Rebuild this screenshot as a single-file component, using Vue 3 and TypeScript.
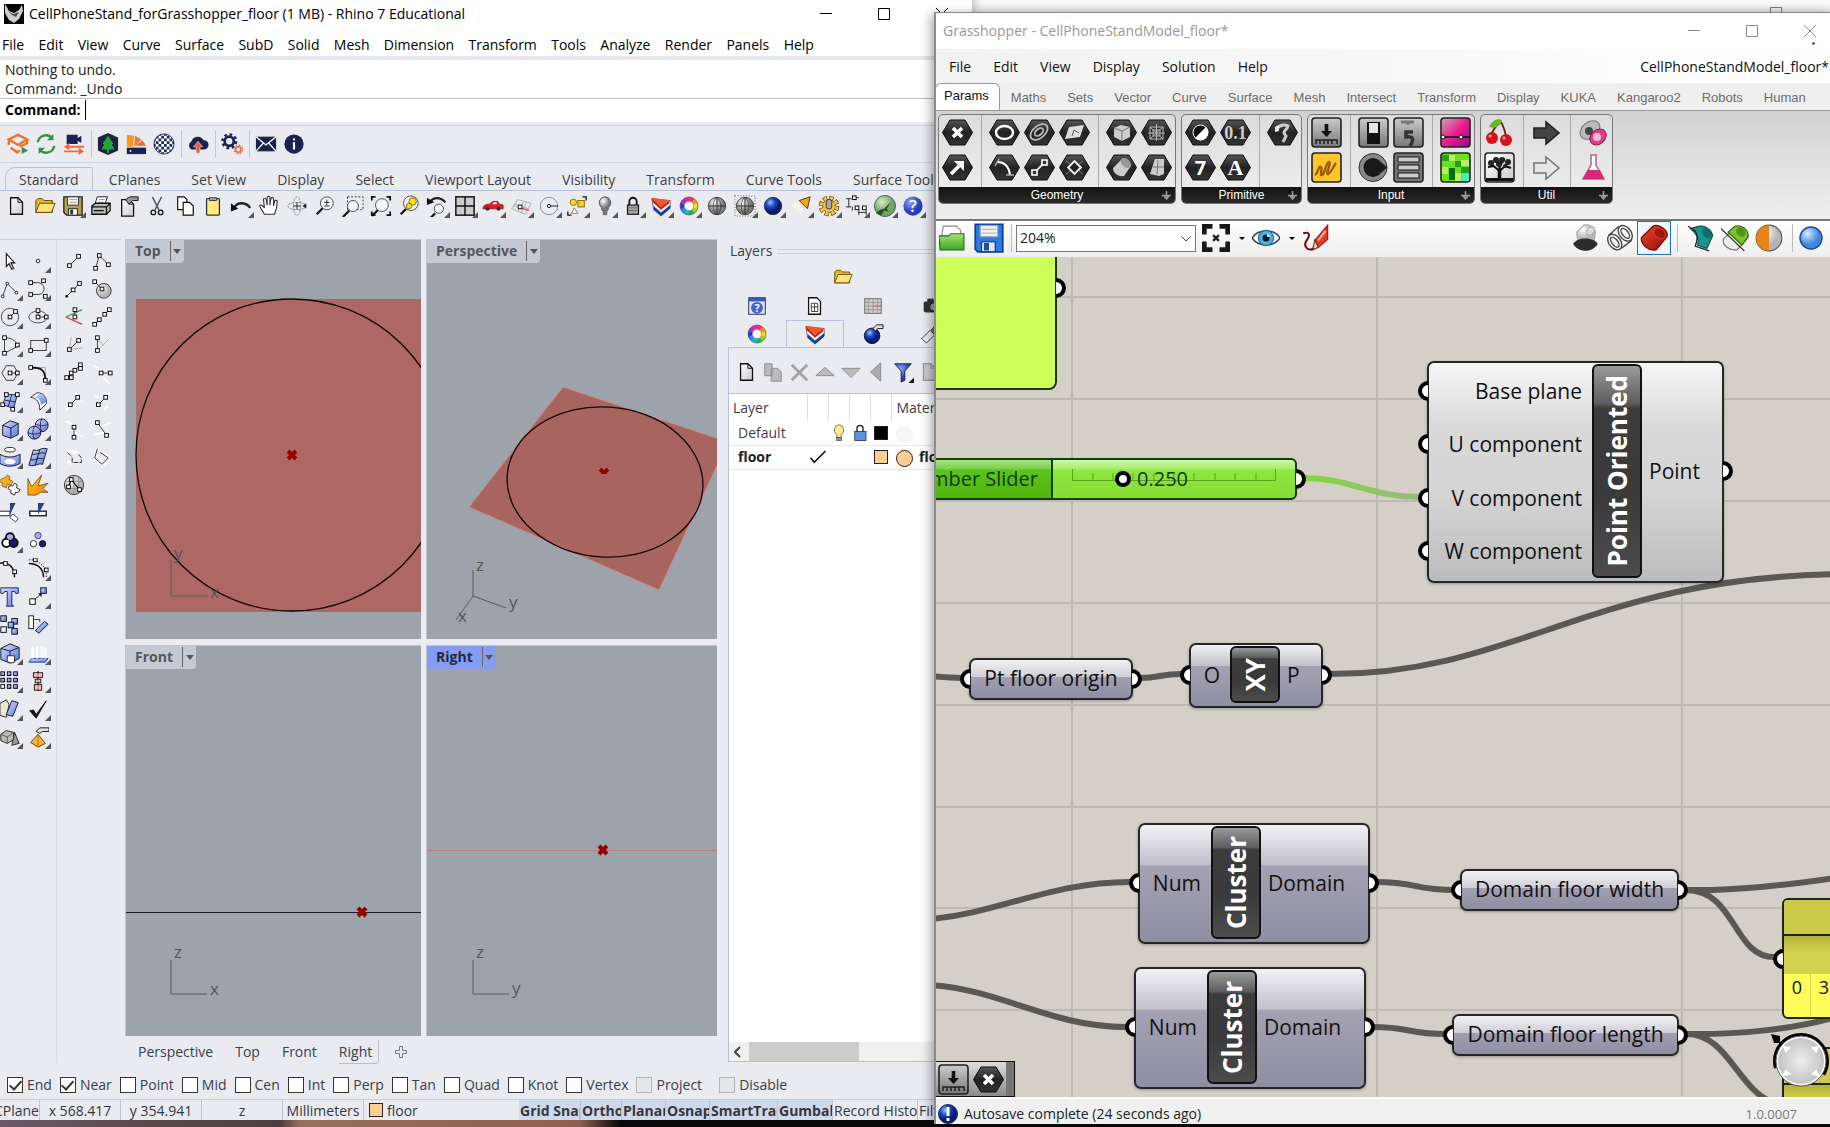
<script setup lang="ts">
import { h } from 'vue'

/* ---------- small drawing helpers for the tool glyphs ---------- */
const sq = (x: number, y: number) =>
  `<rect x="${x - 2}" y="${y - 2}" width="4" height="4" fill="#fff" stroke="#000"/>`
const ln = (d: string, c = '#333', w = 1) =>
  `<path d="${d}" fill="none" stroke="${c}" stroke-width="${w}"/>`
const box = (x: number, y: number, f = 'url(#peri)', s = 6) =>
  `<rect x="${x}" y="${y}" width="${s}" height="${s}" fill="${f}" stroke="#001"/>`
const page = (x: number, y: number, f = 'url(#paper)', c = '#111') =>
  `<path d="M${x} ${y}h8l5 5v13h-13z" fill="${f}" stroke="${c}" stroke-width="1.4"/><path d="M${x + 8} ${y}v5h5" fill="none" stroke="${c}"/>`
const lens = (x: number, y: number, r = 6) =>
  `<path d="M${x - 4} ${y + 5}l-7 7" stroke="#111" stroke-width="2.4"/><circle cx="${x}" cy="${y}" r="${r}" fill="#f4f6f8" stroke="#444"/>`
const ball = (f: string, extra = '') =>
  `<circle cx="12" cy="12" r="9.5" fill="url(#${f})" stroke="#222" stroke-width=".8"/>${extra}`
const wheel = (() => {
  const cs = ['#f33', '#f83', '#fd0', '#8d1', '#1b4', '#1bb', '#28f', '#33d', '#93d', '#e2a']
  return cs.map((c, i) => {
    const a = (i / 10) * 2 * Math.PI - Math.PI / 2
    const b = ((i + 1.1) / 10) * 2 * Math.PI - Math.PI / 2
    const p = (t: number) => `${(12 + 7.4 * Math.cos(t)).toFixed(2)} ${(12 + 7.4 * Math.sin(t)).toFixed(2)}`
    return `<path d="M${p(a)}A7.4 7.4 0 0 1 ${p(b)}" fill="none" stroke="${c}" stroke-width="4.4"/>`
  }).join('') + '<circle cx="12" cy="12" r="9.8" fill="none" stroke="#222" stroke-width=".6"/><circle cx="12" cy="12" r="5" fill="#fff" stroke="#555" stroke-width=".5"/>'
})()
const wedge =
  '<path d="M2 4L22 6v8L12 23 4 16z" fill="#fff" stroke="#222" stroke-width=".7"/><path d="M2 3L21 6 12 13z" fill="#f4562f"/><path d="M2 3l10 10v3L3 8zM12 13l9-7v3l-9 7z" fill="#c9200f"/><path d="M12 19l10-8v4l-10 8-8-7v-4z" fill="#1c3f9c"/>'
const folder =
  '<path d="M2 6l2-2h5l2 2h9v13H2z" fill="#e9b92d" stroke="#5b4300"/><path d="M2 19L6 9h17l-4 10z" fill="#ffe27a" stroke="#5b4300"/>'
const meridians = '<path d="M12 3v18M3 12h18" stroke="#222"/><ellipse cx="12" cy="12" rx="4" ry="9" fill="none" stroke="#333" stroke-width=".7"/>'

const art: Record<string, string> = {
  /* render plug-in bar */
  start: '<path d="M2 7l10-5 10 5-10 6zM2 7v6M4 16l7 5 3-2M22 7v4l-8 4" fill="none" stroke="#e8762b" stroke-width="2.6"/><path d="M16 15l7 4-7 4z" fill="#2c9440"/>',
  sync: '<path d="M3 10a9 9 0 0 1 16-4M21 14a9 9 0 0 1-16 4" fill="none" stroke="#32923d" stroke-width="2.6"/><path d="M20 1v7h-7zM4 23v-7h7z" fill="#32923d"/>',
  camera: '<path d="M4 2h12v10H4zM15 6l5-3v8l-5-3z" fill="#1b2250"/><path d="M7 15h16M1 20h16" stroke="#ef6a3c" stroke-width="2"/><path d="M7 11l-6 4 6 4zM17 16l6 4-6 4z" fill="#ef6a3c"/>',
  tree: '<path d="M12 0l11 5v14l-11 5-11-5V5z" fill="#1d2340"/><path d="M12 3l6 9h-2l3 6h-6v4h-2v-4H5l3-6H6z" fill="#23a53a"/>',
  swatch: '<path d="M2 2l8 1-1 12H2z" fill="#f39a1c"/><path d="M11 3l7 4-8 8z" fill="#f2752a"/><path d="M19 8l4 6H11z" fill="#ef6a3c"/><rect x="2" y="16" width="21" height="7" fill="#1b2250"/><circle cx="6" cy="19.500" r="1" fill="#fff"/>',
  checker: '<circle cx="12" cy="12" r="11" fill="url(#chk)" stroke="#222a55"/>',
  cloud: '<path d="M5 18a5 5 0 0 1 0-9 7 7 0 0 1 13-1 5 5 0 0 1 1 10z" fill="#1b2250"/><path d="M12 9l5 6h-3v7h-4v-7H7z" fill="#ef5a3c" stroke="#e9ebf0" stroke-width=".6"/>',
  gears: '<circle cx="9" cy="9" r="5" fill="none" stroke="#1b2250" stroke-width="3"/><circle cx="9" cy="9" r="7.500" fill="none" stroke="#1b2250" stroke-width="2.600" stroke-dasharray="3 2.900"/><circle cx="19" cy="18" r="3" fill="none" stroke="#ef6a3c" stroke-width="1.600"/><circle cx="19" cy="18" r="4.600" fill="none" stroke="#ef6a3c" stroke-width="1.600" stroke-dasharray="1.800 1.800"/>',
  mail: '<rect x="1" y="4" width="22" height="16" fill="#1b2250"/><path d="M1 4l11 9 11-9M1 20l8-9M23 20l-8-9" fill="none" stroke="#fff" stroke-width="1.500"/>',
  info: '<circle cx="12" cy="12" r="10.500" fill="#1b2250"/><path d="M12 10v8M12 6v2" stroke="#fff" stroke-width="2.400"/>',
  /* standard bar */
  file: page(5, 3, 'url(#paper)'),
  open: folder,
  save: '<path d="M2 2h20v20H5l-3-3z" fill="#b1a24a" stroke="#222" stroke-width="1.400"/><rect x="6" y="2" width="12" height="9" fill="#f5f5f5" stroke="#333"/><path d="M8 5h8M8 8h8" stroke="#999"/><rect x="7" y="15" width="10" height="7" fill="#eee" stroke="#222"/><rect x="9" y="16" width="3" height="5" fill="#333"/>',
  print: '<path d="M8 2h11l-3 9H5z" fill="#fff" stroke="#111"/><path d="M10 5h6M9 8h6" stroke="#888"/><path d="M2 12l4-3h16v8l-4 4H2z" fill="#bbb" stroke="#111" stroke-width="1.400"/><path d="M2 13h16v8M18 13l4-4M4 17h11" fill="none" stroke="#111" stroke-width="1.400"/>',
  props: page(4, 5) + '<path d="M8 5l5-3h9v4h-6l-4 4z" fill="#999" stroke="#111"/>',
  cut: '<path d="M7 2l7 14M17 2l-7 14" stroke="#555" stroke-width="1.600"/><circle cx="8" cy="19" r="2.500" fill="none" stroke="#111" stroke-width="1.400"/><circle cx="16" cy="19" r="2.500" fill="none" stroke="#111" stroke-width="1.400"/>',
  copy: '<path d="M4 2h7l3 3v11H4z" fill="#fff" stroke="#111" stroke-width="1.300"/><path d="M10 8h7l4 4v10H10z" fill="#fff" stroke="#111" stroke-width="1.300"/>',
  paste: '<rect x="5" y="4" width="14" height="18" rx="1" fill="#ffec7c" stroke="#333" stroke-width="1.400"/><path d="M8 6V3h8v3z" fill="#aaa" stroke="#333"/>',
  undo: '<path d="M5 13C9 7 18 8 22 14" fill="none" stroke="#222" stroke-width="2.600"/><path d="M1 9v9l8-3z" fill="#111"/>',
  pan: '<path d="M7 21c-2-4-5-7-5-9s3-1 5 2L6 5c0-2 2-2 3 0l1 6V3c0-2 3-2 3 0v8l1-7c1-2 3-1 3 0v8l1-5c1-2 3-1 3 0 0 6-1 9-3 14z" fill="#fff" stroke="#333" stroke-width="1.200"/>',
  rotate: '<ellipse cx="12" cy="12" rx="10" ry="4" fill="none" stroke="#888" stroke-dasharray="3 1"/><ellipse cx="12" cy="12" rx="4" ry="10" fill="none" stroke="#888" stroke-dasharray="3 1"/><path d="M12 8v8M8 12h8" stroke="#222"/><path d="M18 12l4-3v6z" fill="#222"/>',
  zoom: lens(14, 9, 7) + '<path d="M11 8h6M14 5v6M11 12h6" stroke="#222"/>',
  zoomwin: '<rect x="6" y="2" width="17" height="14" fill="none" stroke="#222" stroke-dasharray="2 2"/>' + lens(12, 12),
  zoomext: '<path d="M2 6V2h4M18 2h4v4M22 18v4h-4M6 22H2v-4" fill="none" stroke="#111" stroke-width="2"/>' + lens(13, 11, 7),
  zoomsel: lens(14, 9, 8) + '<circle cx="16" cy="7" r="4" fill="#fd2" stroke="#860"/><circle cx="12" cy="12" r="3" fill="#fd2" stroke="#860"/>',
  zoomundo: lens(14, 15, 5) + '<path d="M4 8c4-6 12-6 17 0" fill="none" stroke="#222" stroke-width="2.400"/><path d="M1 3v8l8-3z" fill="#111"/>',
  four: '<rect x="2" y="2" width="20" height="20" fill="#ccc" stroke="#111" stroke-width="1.600"/><path d="M12 2v20M2 12h20" stroke="#111" stroke-width="1.600"/>',
  car: '<path d="M1 14l2-3 5-1 4-3h5l2 3 4 1v4H1z" fill="#dc1f26" stroke="#a11"/><path d="M11 10l2-2h3v2z" fill="#fff"/><circle cx="6" cy="15" r="2.200" fill="#333"/><circle cx="18" cy="15" r="2.200" fill="#333"/>',
  cplane: '<path d="M2 15L8 5l15 4-6 12zM5 10l15 5M9 17L15 7M4 12l15 5M12 19l6-11" fill="none" stroke="#aaa"/><path d="M12 14l9 3" stroke="#c33"/><rect x="9" y="11" width="4" height="4" fill="#fff" stroke="#111"/>',
  osn: '<circle cx="12" cy="12" r="9.500" fill="none" stroke="#888"/><path d="M12 12h10" stroke="#111"/><circle cx="12" cy="12" r="1.800" fill="#fff" stroke="#111"/>',
  sel: '<circle cx="8" cy="8" r="3.500" fill="#fd2" stroke="#860"/><rect x="13" y="6" width="7" height="7" fill="#fc2" stroke="#860"/><path d="M9 14l4 6H6z" fill="#fff" stroke="#b63"/><path d="M18 2h4v4M2 18v4h4" fill="none" stroke="#111" stroke-width="1.400"/>',
  bulb: '<path d="M12 2a6.500 6.500 0 0 1 4 11.500L15 17H9l-1-3.500A6.500 6.500 0 0 1 12 2z" fill="url(#grey)" stroke="#555"/><rect x="9.500" y="17" width="5" height="5" fill="#777"/>',
  lock: '<path d="M8 11V7a4 4 0 0 1 8 0v4" fill="none" stroke="#111" stroke-width="2"/><rect x="6" y="11" width="12" height="10" fill="#aaa" stroke="#111" stroke-width="1.300"/><path d="M7 14h10M7 17h10" stroke="#666"/>',
  wedge,
  wheel,
  wire: ball('grey', meridians),
  wiredot: '<rect x="1" y="1" width="22" height="22" fill="none" stroke="#999" stroke-dasharray="1 2" stroke-width="2"/>' + ball('grey', meridians),
  blueball: ball('blue'),
  cone: '<path d="M0 12L13 3v18z" fill="#f6f2e4"/><path d="M10 6l12-4-3 13z" fill="#f6a21d" stroke="#333"/>',
  gear: '<circle cx="12" cy="12" r="8.500" fill="none" stroke="#6b4b00" stroke-width="5.600" stroke-dasharray="4.500 2.170"/><circle cx="12" cy="12" r="7" fill="#f6c24a" stroke="#6b4b00"/><circle cx="12" cy="12" r="8.500" fill="none" stroke="#f6c24a" stroke-width="4" stroke-dasharray="3.200 3.470" stroke-dashoffset="-.6"/><rect x="9" y="5" width="6" height="10" rx="2" fill="#aaa" stroke="#333"/>',
  dims: '<path d="M3 4v9M0 4h6M0 13h6M9 3h5M9 1v4M7 13v4M14 16v6M22 16v6M14 19h8" stroke="#222" fill="none"/>' + sq(9, 3) + sq(12, 14) + sq(20, 14),
  hopper: '<circle cx="12" cy="12" r="11.500" fill="url(#green)" stroke="#456"/><path d="M2 20c3-3 6-5 9-5l8-8-5 8 2 3-5-1-3 5z" fill="#344b2e"/>',
  help: '<circle cx="12" cy="12" r="10.500" fill="url(#royal)"/><text x="12" y="19" font-size="18" font-family="Open Sans, sans-serif" font-weight="600" fill="#fff" text-anchor="middle">?</text>',
  /* main side bar */
  arrow: '<path d="M8 4v14l3-3 3 6 2-1-3-6h4z" fill="#fff" stroke="#111" stroke-width="1.200"/>',
  point: '<circle cx="12" cy="12" r="2" fill="#fff" stroke="#222"/>',
  poly: ln('M4 20L9 6l10 10') + '<circle cx="4" cy="20" r="1.500" fill="#fff" stroke="#111"/><circle cx="9" cy="6" r="1.500" fill="#fff" stroke="#111"/><circle cx="19" cy="16" r="1.500" fill="#fff" stroke="#111"/>',
  curve: ln('M5 5h6c10 0 10 13 1 13H5') + sq(4, 5) + sq(4, 18) + sq(18, 3) + sq(20, 20),
  circle: '<circle cx="12" cy="12" r="9.500" fill="none" stroke="#444"/>' + ln('M12 12l6-6') + sq(12, 12) + sq(18, 6),
  ellipse: '<ellipse cx="12" cy="12" rx="10" ry="6.500" fill="none" stroke="#444"/>' + ln('M12 12V5M12 12h9') + sq(12, 5) + sq(12, 12) + sq(21, 12),
  arc: ln('M6 21V4c7 0 12 3 15 9L6 21') + sq(6, 4) + sq(6, 21) + sq(20, 12),
  rect: '<rect x="4" y="7" width="17" height="11" fill="none" stroke="#333"/>' + sq(4, 18) + sq(21, 7),
  hexa: ln('M8 4h8l5 8-5 8H8l-5-8z') + ln('M12 12h8') + sq(12, 12) + sq(20, 12),
  fillet: ln('M4 6h16v14', '#aaa') + ln('M4 6c12 0 16 3 16 14', '#111', 2) + sq(4, 6) + sq(20, 20),
  srfpt: '<path d="M8 5h12l-4 15-12-4z" fill="url(#peri)" stroke="#224"/>' + ln('M14 5l-4 13M6 11l12 2', '#224') + sq(8, 5) + sq(20, 5) + sq(4, 16) + sq(15, 21),
  srfcv: '<path d="M4 8l7-5c7 0 11 5 10 12l-7 7c0-8-3-13-10-14z" fill="#fff" stroke="#222"/><path d="M8 8l6-4c5 1 7 5 7 9l-6 3c0-5-3-7-7-8z" fill="url(#peri)"/>',
  cube: '<path d="M4 8l8-5 9 3v12l-8 4-9-3z" fill="url(#peri)" stroke="#112"/><path d="M4 8l9 3 8-5M13 11v11" fill="none" stroke="#112"/>',
  balls: '<circle cx="16" cy="8" r="7" fill="url(#peri)" stroke="#112"/><path d="M9 6c4 3 9 3 14 1M16 1c-2 4-2 9 0 14" fill="none" stroke="#112" stroke-width=".8"/><circle cx="8" cy="16" r="7" fill="url(#peri)" stroke="#112"/><path d="M1 16c4 2 9 2 14 0M8 9c-2 4-2 10 0 14" stroke="#112" fill="none" stroke-width=".8"/>',
  tube: '<ellipse cx="12" cy="4" rx="6" ry="2.500" fill="#fff" stroke="#222"/><path d="M1 9c6 4 15 4 22 0v10c-7 4-16 4-22 0z" fill="url(#peri)" stroke="#112"/><ellipse cx="12" cy="17" rx="6" ry="3" fill="#fff"/>',
  quilt: '<path d="M7 4c5 3 8-3 15-1l-5 17c-5-2-8 3-15 1z" fill="url(#peri)" stroke="#112"/><path d="M14 4l-5 17M4 15c6 1 8-3 14-1M5 9c6 1 9-3 15-1" fill="none" stroke="#112"/>',
  puzzle: '<path d="M3 5l4-1 2-3 3 2-1 3 4 2-2 4-4-1-1 4-5-2 1-3-4-2z" fill="#f7ae1c" stroke="#863"/><path d="M11 13l4 0 2-3 3 2-1 3 4 2-2 3-3 0-1 3-4-2 0-3-3-2z" fill="#fff" stroke="#222"/>',
  burst: '<path d="M1 5l4 9L16 1l-4 12 11-3-6 6 6 4h-8l-5 3H1z" fill="url(#flame)" stroke="#6a3a00" stroke-width=".8"/>',
  trim: '<rect x="0" y="10" width="12" height="5" fill="#fff" stroke="#111"/><path d="M12 1h6l-6 13z" fill="#24409c"/><path d="M15 13l6 5-3 4-6-5z" fill="#fff" stroke="#444"/>',
  split: '<rect x="3" y="10" width="18" height="5" fill="#fff" stroke="#111" stroke-width="1.400"/><path d="M12 1h7l-7 13z" fill="#24409c"/>',
  union: '<g stroke="#111" stroke-width="2"><circle cx="12" cy="8" r="4.500" fill="#a9a6f4"/><circle cx="8" cy="14" r="4.500" fill="#fff"/><circle cx="16" cy="14" r="4.500" fill="#1d1a72"/></g><circle cx="12" cy="8" r="3" fill="#a9a6f4"/>',
  apart: '<circle cx="12" cy="6" r="3.500" fill="#a9a6f4" stroke="#446"/><circle cx="7" cy="15" r="3.500" fill="#fff" stroke="#222"/><circle cx="17" cy="15" r="3.500" fill="#1d1a72" stroke="#113"/>',
  cvedit: ln('M0 6c10-2 17 3 17 15', '#111', 1.6) + sq(7, 6) + sq(17, 15),
  cvpts: ln('M2 6c10 0 16 6 16 15', '#111', 1.6) + '<path d="M2 2h8l11 10v9" fill="none" stroke="#111" stroke-dasharray="1.500 1.500"/>' + sq(9, 2) + sq(21, 13),
  text: '<path d="M2 2h19v6h-3l-1-2h-3v14l2 2H8l1-2V6H6L5 8H2z" fill="url(#peri)" stroke="#12205c"/>',
  move: ln('M8 15l7-6') + '<path d="M12 8h4v4z" fill="#111"/>' + box(3, 14, '#fff') + box(15, 2),
  blocks: box(2, 2) + box(14, 5) + box(10, 9) + box(2, 14, '#eee') + box(14, 16),
  spin: '<rect x="2" y="2" width="5" height="14" fill="#fff" stroke="#111"/><path d="M9 18L19 8l4 3-10 10z" fill="url(#peri)" stroke="#112"/><path d="M8 6h6v3" fill="none" stroke="#333"/>',
  cubecut: '<path d="M2 7l10-5 10 4v12l-10 5-10-4z" fill="url(#peri)" stroke="#112"/><path d="M2 7l10 3 10-4M12 10v6" fill="none" stroke="#112"/><path d="M9 15h8v7l-5 1-3-2z" fill="#fff" stroke="#222"/>',
  flow: '<path d="M5 18h18l-3 4H2z" fill="url(#peri)" stroke="#24409c"/><path d="M6 18V5M11 18V5M16 18V5M20 18V6" stroke="#fff" stroke-width="2.400"/>',
  grid: [2, 9, 16].map(x => [2, 9, 16].map(y => box(x, y, x === 2 && y === 16 ? '#fff' : 'url(#peri)', 4)).join('')).join(''),
  align: '<path d="M12 1v22" stroke="#c33" stroke-width="2"/><g fill="#f7b3b3" fill-opacity=".7" stroke="#111"><rect x="7" y="3" width="10" height="5"/><rect x="9" y="10" width="6" height="4"/><rect x="8" y="16" width="8" height="6"/></g>',
  copies: '<path d="M1 6l7-4 3 5-3 14-7-2z" fill="#eee6d8" stroke="#222"/><path d="M14 3l7 2-6 15-7-2z" fill="url(#peri)" stroke="#112"/>',
  check: '<path d="M3 14l4-1 3 5L21 3 10 22z" fill="#111" stroke="#111"/>',
  solids: '<path d="M2 9l6-4 8 2v8l-7 4-7-3z" fill="#bbb" stroke="#222"/><path d="M2 9l7 3 7-5M9 12v7" fill="none" stroke="#555"/><path d="M17 7l5 12-8 2z" fill="#999" stroke="#222"/>',
  pyramid: '<path d="M12 9l8 10-8 4-8-5z" fill="#fbb63a" stroke="#5b3c00"/><path d="M12 9v14" stroke="#a36a00"/><path d="M10 6l4-4h10v4h-7l-3 2z" fill="#ddd" stroke="#111"/>',
  /* lines bar */
  l1: ln('M7 17L17 7') + sq(7, 17) + sq(17, 7),
  l2: ln('M5 20L9 6l10 10') + sq(5, 20) + sq(9, 6) + sq(19, 16),
  l3: ln('M4 20L18 6') + sq(11, 13) + sq(18, 6) + '<circle cx="4" cy="20" r="1.500" fill="#111"/>',
  l4: '<circle cx="14" cy="14" r="8" fill="url(#soft)" stroke="#333"/>' + ln('M4 4l8 8') + sq(4, 4) + sq(12, 12),
  l5: '<path d="M3 12l18-8" stroke="#3c9a4a" stroke-width="1.400"/><path d="M3 12l18 8" stroke="#d33" stroke-width="1.400"/>' + ln('M13 4v9') + sq(13, 4) + sq(13, 12),
  l6: ln('M4 20L20 4', '#999') + sq(4, 20) + sq(9, 15) + sq(15, 9) + sq(20, 4),
  l7: ln('M7 17L9 3M7 17l15-2', '#aaa') + ln('M7 17L17 7') + sq(7, 17) + sq(17, 7),
  l8: ln('M7 18L20 5M7 8c4 0 5 2 6 5', '#aaa') + ln('M7 4v14') + sq(7, 4) + sq(7, 18),
  l9: ln('M2 20L19 3', '#444') + sq(4, 17) + sq(9, 17) + sq(9, 12) + sq(13, 9) + sq(19, 7) + sq(19, 3),
  l10: ln('M2 4c10 2 9 15 18 19', '#fff', 2) + ln('M11 12h10') + sq(11, 12) + sq(21, 12),
  l11: ln('M14 2v6M3 22l4-4M18 12h4', '#fff', 2) + ln('M8 16l8-8') + sq(8, 16) + sq(16, 8),
  l12: ln('M4 6l4 2M14 22l4-4M18 4h4', '#fff', 2) + ln('M8 16l8-8') + sq(8, 16) + sq(16, 8),
  l13: ln('M2 4c8 0 8 4 9 8 2 6 6 8 11 8', '#fff', 2) + ln('M12 10v11') + sq(12, 10) + sq(12, 21),
  l14: ln('M14 8l8-3M4 18l10-2', '#fff', 2) + ln('M7 5l10 14') + sq(7, 5) + sq(17, 19),
  l15: ln('M4 5l14 3M5 16l4 4', '#fff', 3) + '<path d="M5 7l5 5M10 13v5h10v-5l-4-5" fill="none" stroke="#222" stroke-dasharray="5 1.500"/>',
  l16: '<path d="M7 3L4 14l9 7 7-8-8-6" fill="none" stroke="#fff" stroke-width="3"/><path d="M7 3L4 13l8 7 7-7-9-6" fill="none" stroke="#222"/>',
  l17: '<circle cx="12" cy="12" r="10.500" fill="url(#soft)" stroke="#333"/><path d="M12 2v20M3 8h18M3 16h18M7 3v18M17 3v18" stroke="#777" stroke-width=".7" fill="none"/>' + ln('M6 14L9 6l9 11', '#111', 1.4) + sq(6, 14) + sq(9, 6) + sq(18, 17),
  /* panel */
  helpbox: '<rect x="3" y="3" width="18" height="18" fill="#dfe6ff" stroke="#223"/><rect x="3" y="3" width="18" height="4" fill="#3a59b8"/><circle cx="12" cy="14" r="6.500" fill="#4a62c4"/><text x="12" y="19" font-size="12" font-family="Open Sans, sans-serif" font-weight="700" fill="#fff" text-anchor="middle">?</text>',
  sheet: '<path d="M5 3h9l4 4v14H5z" fill="#fff" stroke="#111" stroke-width="1.400"/><path d="M8 9h7v9H8zM8 13h7M11.500 9v9" fill="none" stroke="#333"/>',
  graph: '<rect x="3" y="4" width="18" height="16" fill="#ccc" stroke="#666"/><path d="M3 8h18M3 12h9M3 16h18M7 4v16M12 4v16M17 4v16" stroke="#999"/><path d="M12 12h9" stroke="#c44"/>',
  photo: '<rect x="4" y="7" width="18" height="12" rx="2" fill="#333"/><rect x="8" y="4" width="7" height="4" fill="#333"/><circle cx="15" cy="13" r="4.500" fill="#999" stroke="#111"/>',
  bomb: '<circle cx="11" cy="14" r="8.500" fill="url(#blue)" stroke="#112"/><path d="M12 6l4-4h7v4h-6l-2 3z" fill="#ddd" stroke="#111"/>',
  brush: '<path d="M12 8l5-6 4 3-5 8z" fill="#e4572e" stroke="#333"/><path d="M2 17l9-9 5 5-9 9z" fill="#eee" stroke="#333"/>',
  pages: '<path d="M3 3h8v13H3zM10 8h7l4 4v10H10z" fill="#bbb" stroke="#888"/>',
  cross: '<path d="M4 4l17 17M21 4L4 21" stroke="#a3a3a3" stroke-width="3"/>',
  up: '<path d="M12 7l10 9H2z" fill="#bbb" stroke="#888"/>',
  down: '<path d="M12 18l10-10H2z" fill="#bbb" stroke="#888"/>',
  left: '<path d="M5 12l11-10v20z" fill="#aaa" stroke="#888"/>',
  funnel: '<path d="M3 3h18l-7 8v10l-4 2V11z" fill="url(#royal)" stroke="#123"/><path d="M24 18v6h-6z" fill="#111"/>',
  filegrey: page(6, 3, '#ccc', '#999'),
  lamp: '<path d="M12 1a7 7 0 0 1 3 13v4H9v-4a7 7 0 0 1 3-13z" fill="#ffe98a" stroke="#554"/><rect x="9" y="18" width="6" height="4" fill="#999" stroke="#444"/>',
  padlock: '<path d="M8 11V6a4 4 0 0 1 8 0v5" fill="none" stroke="#333" stroke-width="2"/><rect x="5" y="10" width="15" height="12" fill="#5b93e0" stroke="#224"/>',
  tick: '<path d="M2 13l5 6L22 4" fill="none" stroke="#111" stroke-width="2.200"/>',
  /* Grasshopper canvas bar */
  gopen: '<path d="M4 1h12l4 4v8H2z" fill="#fff" stroke="#888"/><path d="M0 10h9l2-2h12v15H1z" fill="url(#leaf)" stroke="#1d6a15"/>',
  gsave: '<path d="M1 1h22v22H3l-2-2z" fill="#2d7ae0" stroke="#0c3f96" stroke-width="1.400"/><rect x="5" y="2" width="14" height="9" fill="#f2f2f2" stroke="#8ab"/><path d="M6 5h12M6 8h12" stroke="#bbb"/><rect x="6" y="15" width="11" height="8" fill="#dfe8f4" stroke="#0c3f96"/><rect x="8" y="16" width="4" height="6" fill="#24508e"/>',
  gext: '<path d="M2 9V2h7M15 2h7v7M22 15v7h-7M9 22H2v-7" fill="none" stroke="#181818" stroke-width="4"/><path d="M9.500 9.500l5 5M14.500 9.500l-5 5" stroke="#222" stroke-width="2"/>',
  geye: '<path d="M0 12C5 4 19 4 24 12 19 20 5 20 0 12z" fill="#fff" stroke="#345" stroke-width="1.300"/><circle cx="12" cy="12" r="6.500" fill="#4fb0dc" stroke="#1c6c9c"/><circle cx="12" cy="12" r="3" fill="#0b1a26"/><circle cx="14" cy="10" r="1.200" fill="#fff"/>',
  gpen: '<path d="M11 14L22 1v12l-8 7z" fill="#e33c2c" stroke="#a11"/><path d="M14 14l6-8" stroke="#f8a090" stroke-width="2"/><path d="M11 14l-2 8 5-2z" fill="#f2d6a8" stroke="#633"/><path d="M1 8c6-2 6 2 3 6s0 10 6 7" fill="none" stroke="#7a0f0a" stroke-width="1.800"/>',
  cylgrey: '<path d="M4 7l6-6c4-1 9 1 10 6l-1 8H5z" fill="url(#soft)" stroke="#aaa"/><ellipse cx="16" cy="6" rx="3" ry="4" transform="rotate(40 16 6)" fill="#ddd" stroke="#aaa"/><path d="M1 17c4-6 17-6 21 0-4 8-17 8-21 0z" fill="#2c2c2c"/>',
  cylwire: '<g fill="none" stroke="#444" stroke-width="1.200"><ellipse cx="16.500" cy="8" rx="5" ry="7.500" transform="rotate(-38 16.500 8)"/><ellipse cx="7.500" cy="15.500" rx="5" ry="7.500" transform="rotate(-38 7.500 15.500)"/><ellipse cx="16.500" cy="8" rx="2.500" ry="5" transform="rotate(-38 16.500 8)"/><ellipse cx="7.500" cy="15.500" rx="2.500" ry="5" transform="rotate(-38 7.500 15.500)"/><path d="M2 10l9-8M13 21l9-7"/></g>',
  cylred: '<path d="M1 12L11 2c5-3 14 4 12 9l-9 11C8 24 1 18 1 12z" fill="url(#red)" stroke="#6c0c08"/><ellipse cx="17" cy="8" rx="4" ry="5.500" transform="rotate(-45 17 8)" fill="#a5140d" stroke="#e0402c" stroke-width=".8"/>',
  cylteal: '<path d="M3 4l7-2c6-1 11 3 12 8l-5 11-8-3c2-5 0-9-6-14z" fill="#17968f" stroke="#0a4f4c"/><path d="M1 2l6 4c3 4 2 8 0 13l12 4" fill="none" stroke="#222"/><ellipse cx="17" cy="8" rx="3.500" ry="5" transform="rotate(-40 17 8)" fill="#0e6f6a"/>',
  cylgreen: '<path d="M2 13l9-9c5-5 13 2 12 8l-9 10C8 23 1 19 2 13z" fill="#eee" stroke="#777"/><path d="M6 7l6-5c5-2 12 3 11 9l-5 7z" fill="#7cc42c" stroke="#2c6a10"/><ellipse cx="17" cy="7" rx="3.500" ry="4.500" transform="rotate(-40 17 7)" fill="#4f9416"/><path d="M0 4l20 19" stroke="#222"/>',
  halfball: '<circle cx="12" cy="12" r="11" fill="url(#soft)" stroke="#555"/><path d="M12 1a11 11 0 0 0 0 22z" fill="#e88318"/>',
  skyball: '<circle cx="12" cy="12" r="11" fill="url(#sky)" stroke="#1a4c98" stroke-width="1.400"/>',
}

const hex = '<path d="M8 1h15l7.500 12.500L23 26H8L.5 13.500z" fill="url(#hex)" stroke="#0c0c0c"/>'
const tile = (f: string) => `<rect x="1" y="-1" width="29" height="29" rx="3" fill="${f}" stroke="#222" stroke-width="1.600"/>`
const chip: Record<string, string> = {
  point: hex + '<path d="M11 9l9 9M20 9l-9 9" stroke="#fff" stroke-width="3.600"/>',
  vector: hex + '<path d="M9 20l8-8" stroke="#fff" stroke-width="3.600"/><path d="M12 7h10v10z" fill="#fff"/>',
  circle: hex + '<ellipse cx="15.500" cy="13.500" rx="8.500" ry="6.500" fill="none" stroke="#fff" stroke-width="2.400"/>',
  arc: hex + '<path d="M8 8c8 0 12 5 13 13" fill="none" stroke="#fff" stroke-width="2.200"/><path d="M6 12l4-7M17 21h8" fill="none" stroke="#aaa" stroke-width="1.500"/>',
  curve: hex + '<g fill="none" stroke="#bbb" stroke-width="1.800" transform="rotate(-40 15 13)"><ellipse cx="15" cy="13" rx="10" ry="6"/><ellipse cx="15" cy="13" rx="5" ry="3"/></g>',
  line: hex + '<path d="M11 18l9-9" stroke="#ddd" stroke-width="2"/><g fill="#333" stroke="#fff" stroke-width="1.600"><rect x="8" y="16" width="5" height="5"/><rect x="18" y="6" width="5" height="5"/></g>',
  plane: hex + '<path d="M6 20l4-12 15-2-4 12z" fill="#ddd"/><path d="M13 17l2-6 5 3" stroke="#555" fill="none"/>',
  rect: hex + '<path d="M7 7l17 13M24 7L7 20" stroke="#777"/><g transform="rotate(45 15.500 13.500)"><rect x="11" y="9" width="9" height="9" fill="#222" stroke="#eee" stroke-width="2"/></g>',
  box: hex + '<path d="M8 9l7-3 9 2v10l-8 4-8-4z" fill="#ccc"/><path d="M8 9l8 3 8-4M16 12v10" stroke="#777" fill="none"/>',
  cyl: hex + '<path d="M7 14l9-9 9 7-7 10c-6 1-11-3-11-8z" fill="#ccc"/><ellipse cx="20" cy="9" rx="4" ry="6" transform="rotate(-50 20 9)" fill="#999"/>',
  mesh: hex + '<path d="M7 14h17M15.500 5v17M9 8l13 12M22 8L9 20M9 8h13v12H9zM12 11h7v6h-7z" stroke="#bbb" fill="none"/>',
  surf: hex + '<path d="M14 5h9v15l-5 2-9-2z" fill="#ccc"/><path d="M12 13h11M17 6l-1 14" stroke="#777"/>',
  bool: hex + '<circle cx="15.500" cy="13.500" r="7.500" fill="#111" stroke="#fff"/><path d="M21 8a7.500 7.500 0 1 1-11 11z" fill="#fff"/>',
  num: hex + '<text x="15.500" y="20" font-size="18" font-family="Liberation Serif, serif" font-weight="700" fill="#ccc" text-anchor="middle">0.1</text>',
  int: hex + '<text x="15.500" y="21" font-size="20" font-family="Open Sans, sans-serif" font-weight="700" fill="#fff" text-anchor="middle">7</text>',
  str: hex + '<text x="15.500" y="21" font-size="22" font-family="Liberation Serif, serif" font-weight="700" fill="#fff" text-anchor="middle">A</text>',
  data: hex + '<path d="M9 10c4-4 8-5 12-3-1 4-4 4-4 7l2 3-3 6" fill="none" stroke="#ccc" stroke-width="3"/><path d="M8 8l4-2v6l-4 1z" fill="#eee"/>',
  slider: tile('url(#steel)') + '<path d="M15.500 5v10" stroke="#111" stroke-width="3.600"/><path d="M10 12h11l-5.500 6z" fill="#111"/><path d="M5 25v-4h21v4M9 21v4M13 21v4M17 21v4M21 21v4" fill="none" stroke="#222" stroke-width="1.500"/>',
  sketch: tile('#fcc52c') + '<path d="M4 21c3-2 4-10 6-8s-2 9 1 8 4-13 7-13-4 13-1 12 5-7 8-11" fill="none" stroke="#9a5c00" stroke-width="2.400"/>',
  toggle: tile('url(#steel)') + '<rect x="9" y="3" width="13" height="22" fill="#111"/><rect x="11" y="4" width="9" height="10" fill="#e6e6e6"/>',
  knob: '<circle cx="15" cy="13.500" r="14" fill="#888" stroke="#333"/><circle cx="15" cy="13.500" r="9.500" fill="#1a1a1a"/><path d="M23 8l6 5.500-6 5.500z" fill="#1a1a1a"/>',
  digits: tile('url(#steel)') + '<path d="M8 3h13M15 3v3" stroke="#777" stroke-width="3"/><path d="M20 13h-7v5c8-1 8 3 4 9" fill="none" stroke="#333" stroke-width="3.600"/>',
  list: tile('#777') + '<g fill="#ccc" stroke="#111"><rect x="5" y="3" width="21" height="5"/><rect x="5" y="11" width="21" height="5"/><rect x="5" y="19" width="21" height="5"/></g>',
  gradient: tile('url(#pink)') + '<path d="M1 18h29" stroke="#111" stroke-width="1.400"/><circle cx="3" cy="18" r="2" fill="#fff" stroke="#111"/><circle cx="21" cy="18" r="2" fill="#fff" stroke="#111"/>',
  image: tile('#6ee21f') + '<path d="M9 1h6v6H9zM21 6h8v6h-8zM2 13h6v7H2zM15 19h6v8h-6z" fill="#b6f06a"/><path d="M2 1h7v6H2zM9 14h6v12H9zM21 13h8v6h-8zM15 7h6v6h-6z" fill="#2a9e1c"/><path d="M9 14h6v12H9z" fill="#0b6a14"/><path d="M22 20h7v7h-7z" fill="#4df0b0"/>',
  cherry: '<path d="M17 3C10 8 8 13 7 17M17 3c3 5 4 10 5 14" stroke="#6b1d12" stroke-width="1.800" fill="none"/><path d="M5 8C8 1 14 -1 18 1c-2 7-7 9-13 7z" fill="#69b52c"/><circle cx="8" cy="19" r="6" fill="#d8121a"/><circle cx="22" cy="21" r="6" fill="#d8121a"/><circle cx="6" cy="17" r="1.500" fill="#faa"/><circle cx="20" cy="19" r="1.500" fill="#faa"/>',
  tree: tile('url(#paper)') + '<path d="M15.500 25V13M15.500 17L6 9M15.500 17l10-9M15.500 13l-4-9M15.500 13l5-9M10 12l-6 1M21 12l6 2" stroke="#111" stroke-width="2.200"/><path d="M15.500 16v10" stroke="#111" stroke-width="3.600"/><g fill="#222"><circle cx="7" cy="9" r="3"/><circle cx="12" cy="6" r="3"/><circle cx="18" cy="6" r="3"/><circle cx="24" cy="8" r="3"/><circle cx="15" cy="10" r="3"/><circle cx="21" cy="12" r="2"/></g><path d="M2 24h27v3H2z" fill="#111"/>',
  arrowd: '<path d="M3 9h12V3l13 11-13 11v-6H3z" fill="#444" stroke="#222" stroke-width="1.600"/>',
  arrowl: '<path d="M3 9h12V3l13 11-13 11v-6H3z" fill="#e6e6e6" stroke="#777" stroke-width="1.600"/>',
  eyes: '<ellipse cx="12" cy="11" rx="11" ry="8" transform="rotate(-40 12 11)" fill="#bbb" stroke="#777"/><circle cx="11" cy="12" r="4" fill="#444"/><ellipse cx="20" cy="18" rx="9" ry="7" transform="rotate(-40 20 18)" fill="#dd3f86" stroke="#8c1c50"/><circle cx="19" cy="18" r="4" fill="#f7b9d6"/>',
  flask: '<path d="M12 1h7M13 2v9L5 25h21L18 11V2" fill="#fff" stroke="#9c6b80" stroke-width="1.500"/><path d="M10 16h12l4 9H5z" fill="#d82878"/>',
}

const Ico = (p: { n: string; s?: number }) =>
  h('svg', { viewBox: '0 0 24 24', width: p.s ?? 24, height: p.s ?? 24, 'aria-hidden': 'true', innerHTML: art[p.n] })
Ico.props = ['n', 's']
const Chip = (p: { n: string }) =>
  h('svg', { viewBox: '0 -2 31 31', width: 31, height: 31, 'aria-hidden': 'true', innerHTML: chip[p.n] })
Chip.props = ['n']

/* ---------- Rhino ---------- */
const rhinoMenu = ['File', 'Edit', 'View', 'Curve', 'Surface', 'SubD', 'Solid', 'Mesh', 'Dimension', 'Transform', 'Tools', 'Analyze', 'Render', 'Panels', 'Help']
const plugGroups = [['start', 'sync', 'camera'], ['tree', 'swatch', 'checker'], ['cloud'], ['gears'], ['mail', 'info']]
const toolTabs = ['Standard', 'CPlanes', 'Set View', 'Display', 'Select', 'Viewport Layout', 'Visibility', 'Transform', 'Curve Tools', 'Surface Tools']
const standard = ['file', 'open', 'save*', 'print', 'props', 'cut', 'copy', 'paste', 'undo*', 'pan', 'rotate', 'zoom', 'zoomwin', 'zoomext', 'zoomsel', 'zoomundo*', 'four*', 'car*', 'cplane*', 'osn*', 'sel*', 'bulb*', 'lock*', 'wedge*', 'wheel*', 'wire', 'wiredot*', 'blueball*', 'cone*', 'gear*', 'dims*', 'hopper*', 'help*']
const mainTools = ['arrow', 'point*', 'poly*', 'curve*', 'circle*', 'ellipse*', 'arc*', 'rect*', 'hexa*', 'fillet*', 'srfpt*', 'srfcv*', 'cube*', 'balls*', 'tube*', 'quilt*', 'puzzle', 'burst', 'trim', 'split', 'union*', 'apart', 'cvedit', 'cvpts*', 'text', 'move*', 'blocks', 'spin', 'cubecut*', 'flow*', 'grid*', 'align*', 'copies*', 'check*', 'solids*', 'pyramid*']
const lineTools = Array.from({ length: 17 }, (_, i) => `l${i + 1}`)
const bare = (n: string) => n.replace('*', '')
const more = (n: string) => n.endsWith('*')

const osnaps = [
  { t: 'End', on: true }, { t: 'Near', on: true }, { t: 'Point' }, { t: 'Mid' }, { t: 'Cen' }, { t: 'Int' }, { t: 'Perp' },
  { t: 'Tan' }, { t: 'Quad' }, { t: 'Knot' }, { t: 'Vertex' }, { t: 'Project', off: true }, { t: 'Disable', off: true },
]
const panes = [
  { t: 'Grid Snap', w: 62, on: true }, { t: 'Ortho', w: 41, on: true }, { t: 'Planar', w: 44, on: true }, { t: 'Osnap', w: 44, on: true },
  { t: 'SmartTrack', w: 68, on: true }, { t: 'Gumball', w: 55, on: true }, { t: 'Record History', w: 85, on: false }, { t: 'Filter', w: 54, on: false },
]
const panelTabs = ['helpbox', 'sheet', 'graph', 'photo', 'wheel', 'wedge', 'bomb', 'brush']
const layerTools = ['file', 'pages', 'cross', 'up', 'down', 'left', 'funnel', 'filegrey']

/* ---------- Grasshopper ---------- */
const ghMenu = ['File', 'Edit', 'View', 'Display', 'Solution', 'Help']
const ghTabs = ['Params', 'Maths', 'Sets', 'Vector', 'Curve', 'Surface', 'Mesh', 'Intersect', 'Transform', 'Display', 'KUKA', 'Kangaroo2', 'Robots', 'Human']
const ribbon = [
  { t: 'Geometry', sets: [['point', 'vector'], ['circle', 'arc', 'curve', 'line', 'plane', 'rect'], ['box', 'cyl', 'mesh', 'surf']] },
  { t: 'Primitive', sets: [['bool', 'int', 'num', 'str'], ['data']] },
  { t: 'Input', sets: [['slider', 'sketch'], ['toggle', 'knob', 'digits', 'list'], ['gradient', 'image']] },
  { t: 'Util', sets: [['cherry', 'tree'], ['arrowd', 'arrowl'], ['eyes', 'flask']] },
]
const params = [
  { t: 'Pt floor origin', x: 33, y: 401, w: 164 },
  { t: 'Domain floor width', x: 524, y: 612, w: 219 },
  { t: 'Domain floor length', x: 516, y: 757, w: 227 },
]
const comps = [
  { t: 'Point Oriented', x: 491, y: 104, w: 297, h: 222, i: 165, ins: ['Base plane', 'U component', 'V component', 'W component'], outs: ['Point'], light: true },
  { t: 'XY', x: 253, y: 386, w: 134, h: 65, i: 41, ins: ['O'], outs: ['P'], light: false },
  { t: 'Cluster', x: 202, y: 566, w: 232, h: 121, i: 73, ins: ['Num'], outs: ['Domain'], light: false },
  { t: 'Cluster', x: 198, y: 710, w: 232, h: 122, i: 73, ins: ['Num'], outs: ['Domain'], light: false },
]
const wires = [
  'M-6 419Q14 421 26 421',
  'M204 421C224 421 224 417 245 417',
  'M394 417C584 417 654 318 914 317',
  'M-6 662C64 656 114 625 194 625',
  'M-6 728C64 732 114 770 190 770',
  'M440 625C480 625 480 633 517 633',
  'M436 770C476 770 470 777 509 777',
  'M750 633C800 634 850 628 900 621',
  'M750 633C800 633 797 700 838 700',
  'M750 777C800 778 860 772 900 760',
  'M750 777C794 777 800 834 842 848',
]
const place = (n: { x: number; y: number; w: number; h?: number }) => ({
  left: `${n.x}px`, top: `${n.y}px`, width: `${n.w}px`, ...(n.h ? { height: `${n.h}px` } : {}),
})
</script>

<template>
  <div class="desktop">
    <svg class="defs" aria-hidden="true">
      <defs>
        <linearGradient id="paper" x2="1" y2="1"><stop stop-color="#fff" /><stop offset="1" stop-color="#c9c9c9" /></linearGradient>
        <linearGradient id="peri" x2="1" y2="1"><stop stop-color="#d3dcff" /><stop offset="1" stop-color="#5a79e2" /></linearGradient>
        <linearGradient id="flame" y2="1" x2="1"><stop stop-color="#ffd21c" /><stop offset="1" stop-color="#f07c00" /></linearGradient>
        <linearGradient id="hex" x2="0" y2="1"><stop stop-color="#555" /><stop offset=".5" stop-color="#222" /><stop offset="1" stop-color="#333" /></linearGradient>
        <linearGradient id="steel" x2="0" y2="1"><stop stop-color="#ccc" /><stop offset="1" stop-color="#777" /></linearGradient>
        <linearGradient id="pink" x2="1" y2="1"><stop stop-color="#c9a9b9" /><stop offset=".5" stop-color="#ef1c8c" /><stop offset="1" stop-color="#8a1090" /></linearGradient>
        <linearGradient id="leaf" x2="0" y2="1"><stop stop-color="#a5e56e" /><stop offset="1" stop-color="#3ea52a" /></linearGradient>
        <linearGradient id="red" x2="1" y2="1"><stop stop-color="#f0442c" /><stop offset="1" stop-color="#8e0f0a" /></linearGradient>
        <linearGradient id="wg"><stop stop-color="#84d63e" /><stop offset="1" stop-color="#98b884" /></linearGradient>
        <radialGradient id="grey" cx=".35" cy=".3"><stop stop-color="#fff" /><stop offset="1" stop-color="#7a7a7a" /></radialGradient>
        <radialGradient id="soft" cx=".35" cy=".3"><stop stop-color="#fff" /><stop offset="1" stop-color="#b5b5b5" /></radialGradient>
        <radialGradient id="blue" cx=".35" cy=".3"><stop stop-color="#9cc0ff" /><stop offset=".5" stop-color="#1c4cc8" /><stop offset="1" stop-color="#081c70" /></radialGradient>
        <radialGradient id="royal" cx=".35" cy=".3"><stop stop-color="#8fa6f4" /><stop offset="1" stop-color="#2440b4" /></radialGradient>
        <radialGradient id="green" cx=".35" cy=".3"><stop stop-color="#d6ecc8" /><stop offset="1" stop-color="#6fa45e" /></radialGradient>
        <radialGradient id="sky" cx=".35" cy=".3"><stop stop-color="#d6ecff" /><stop offset="1" stop-color="#3f86dc" /></radialGradient>
        <radialGradient id="orb"><stop stop-color="#eee" /><stop offset="1" stop-color="#c2c2c2" /></radialGradient>
        <pattern id="chk" width="6" height="6" patternUnits="userSpaceOnUse"><rect width="6" height="6" fill="#fff" /><path d="M0 0h3v6h3V3H0z" fill="#222a55" /></pattern>
      </defs>
    </svg>

    <section class="rhino">
      <header class="r-title">
        <svg class="r-logo" viewBox="0 0 20 20" width="20" height="20" aria-hidden="true">
          <rect width="20" height="20" fill="#050505" />
          <path d="M1 0l4 7 5 2 5-3 3-5 1 6-4 8-5 4-5-3-4-7z" fill="#cfcfcf" />
          <path d="M4 7l5 3 6-2-3 5-4-2z" fill="#555" />
        </svg>
        <h1>CellPhoneStand_forGrasshopper_floor (1 MB) - Rhino 7 Educational</h1>
        <div class="wbtns">
          <button type="button" aria-label="Minimize"><svg viewBox="0 0 12 12" width="12" height="12"><path d="M0 5.500h12" stroke="#000" /></svg></button>
          <button type="button" aria-label="Maximize"><svg viewBox="0 0 12 12" width="12" height="12"><path d="M.5.500h11v11H.5z" fill="none" stroke="#000" /></svg></button>
          <button type="button" aria-label="Close"><svg viewBox="0 0 12 12" width="12" height="12"><path d="M0 0l12 12M12 0L0 12" stroke="#000" /></svg></button>
        </div>
      </header>
      <nav class="r-menu"><button v-for="m in rhinoMenu" :key="m" type="button">{{ m }}</button></nav>
      <div class="cmd">
        <p>Nothing to undo.</p>
        <p>Command: _Undo</p>
        <label class="prompt"><b>Command:</b><i class="caret"></i><input type="text" aria-label="Command" /></label>
      </div>
      <div class="plug">
        <div v-for="(g, i) in plugGroups" :key="i" class="plug-set">
          <button v-for="n in g" :key="n" type="button" class="cell" :aria-label="n"><Ico :n="n" :s="22" /></button>
        </div>
      </div>
      <nav class="r-tabs"><button v-for="(t, i) in toolTabs" :key="t" type="button" :class="{ on: i === 0 }">{{ t }}</button></nav>
      <div class="std">
        <button v-for="n in standard" :key="n" type="button" class="cell" :class="{ more: more(n) }" :aria-label="bare(n)"><Ico :n="bare(n)" :s="22" /></button>
      </div>

      <div class="work">
        <div class="bar main"><button v-for="n in mainTools" :key="n" type="button" class="cell" :class="{ more: more(n) }" :aria-label="bare(n)"><Ico :n="bare(n)" :s="22" /></button></div>
        <div class="bar lines"><button v-for="n in lineTools" :key="n" type="button" class="cell" :aria-label="n"><Ico :n="n" :s="22" /></button></div>

        <div class="center">
          <div class="views">
            <div class="view">
              <svg class="scene" aria-hidden="true">
                <path d="M10 59H330V372H10z" fill="#ae6863" />
                <circle cx="166" cy="215" r="156" class="edge" />
                <path d="M162 211l8 8M170 211l-8 8" class="mark" />
                <path d="M45 320v36h37" class="axis" />
                <text x="48" y="319">y</text><text x="84" y="358">x</text>
              </svg>
              <button type="button" class="vt">Top<i></i></button>
            </div>
            <div class="view">
              <svg class="scene" aria-hidden="true">
                <path d="M136 147L301 202 232 350 42 267z" fill="#a86560" stroke="#c98a84" />
                <ellipse cx="178" cy="242" rx="98" ry="75" transform="rotate(4 178 242)" class="edge" />
                <path d="M173 229l3 3M181 229l-3 3M174 232h6" class="mark" />
                <path d="M46 330v26l33 12M46 356l-17 24" class="axis" />
                <text x="49" y="331">z</text><text x="82" y="368">y</text><text x="31" y="382">x</text>
              </svg>
              <button type="button" class="vt">Perspective<i></i></button>
            </div>
            <div class="view">
              <svg class="scene" aria-hidden="true">
                <path d="M0 266.500H400" stroke="#1c1c1c" />
                <path d="M232 262l8 8M240 262l-8 8" class="mark" />
                <path d="M45 314v34h36" class="axis" />
                <text x="48" y="312">z</text><text x="84" y="349">x</text>
              </svg>
              <button type="button" class="vt">Front<i></i></button>
            </div>
            <div class="view">
              <svg class="scene" aria-hidden="true">
                <path d="M0 204.500H400" stroke="#b97f7f" />
                <path d="M172 200l8 8M180 200l-8 8" class="mark" />
                <path d="M46 314v34h36" class="axis" />
                <text x="49" y="312">z</text><text x="85" y="348">y</text>
              </svg>
              <button type="button" class="vt on">Right<i></i></button>
            </div>
          </div>
          <nav class="vtabs">
            <button type="button">Perspective</button><button type="button">Top</button><button type="button">Front</button>
            <button type="button" class="on">Right</button>
            <button type="button" aria-label="New view"><svg viewBox="0 0 12 12" width="12" height="12"><path d="M4.500.500h3v4h4v3h-4v4h-3v-4h-4v-3h4z" fill="none" stroke="#777" /></svg></button>
          </nav>
        </div>

        <aside class="panel">
          <h2><span>Layers</span></h2>
          <div class="p-folder"><Ico n="open" :s="20" /></div>
          <div class="p-tabs"><button v-for="(n, i) in panelTabs" :key="n" type="button" :class="{ on: i === 5 }" :aria-label="n"><Ico :n="n" :s="22" /></button></div>
          <div class="p-box">
            <div class="p-tools"><button v-for="n in layerTools" :key="n" type="button" :aria-label="n"><Ico :n="n" :s="22" /></button></div>
            <table>
              <thead><tr><th class="nm">Layer</th><th></th><th></th><th></th><th></th><th class="mt">Material</th></tr></thead>
              <tbody>
                <tr><td class="nm">Default</td><td></td><td><Ico n="lamp" :s="18" /></td><td><Ico n="padlock" :s="18" /></td><td><i class="sw blk"></i></td><td class="mt"><i class="dot pale"></i></td></tr>
                <tr class="cur"><td class="nm">floor</td><td><Ico n="tick" :s="18" /></td><td></td><td></td><td><i class="sw"></i></td><td class="mt"><i class="dot"></i>floor</td></tr>
              </tbody>
            </table>
            <div class="hscroll"><svg viewBox="0 0 8 12" width="8" height="12" aria-hidden="true"><path d="M6 1L1 6l5 5" fill="none" stroke="#444" stroke-width="2" /></svg><i></i></div>
          </div>
        </aside>
      </div>

      <div class="osnap">
        <label v-for="o in osnaps" :key="o.t" :class="{ off: o.off }"><input type="checkbox" :checked="o.on" :disabled="o.off" />{{ o.t }}</label>
      </div>
      <footer class="r-status">
        <span class="c0">CPlane</span><span class="c1">x 568.417</span><span class="c1">y 354.941</span><span class="c1">z</span><span class="c1">Millimeters</span>
        <span class="c2"><i class="sw"></i>floor</span>
        <button v-for="p in panes" :key="p.t" type="button" :class="{ on: p.on }" :style="{ width: p.w + 'px' }">{{ p.t }}</button>
      </footer>
    </section>

    <div class="right">
      <div class="behind"><svg viewBox="0 0 12 12" width="12" height="12" aria-hidden="true"><path d="M.5.500h11v11H.5z" fill="none" stroke="#777" /></svg></div>
      <section class="gh">
        <header class="g-title">
          <h1>Grasshopper - CellPhoneStandModel_floor*</h1>
          <div class="wbtns">
            <button type="button" aria-label="Minimize"><svg viewBox="0 0 12 12" width="12" height="12"><path d="M0 5.500h12" stroke="#888" /></svg></button>
            <button type="button" aria-label="Maximize"><svg viewBox="0 0 12 12" width="12" height="12"><path d="M.5.500h11v11H.5z" fill="none" stroke="#888" /></svg></button>
            <button type="button" aria-label="Close"><svg class="cl" viewBox="0 0 12 12" width="12" height="12"><path d="M0 0l12 12M12 0L0 12" stroke="#888" /><circle cx="9.500" cy="18.500" r="1.200" fill="#22229a" /></svg></button>
          </div>
        </header>
        <nav class="g-menu"><div><button v-for="m in ghMenu" :key="m" type="button">{{ m }}</button></div><span>CellPhoneStandModel_floor*</span></nav>
        <nav class="g-tabs"><button v-for="(t, i) in ghTabs" :key="t" type="button" :class="{ on: i === 0 }">{{ t }}</button></nav>
        <div class="ribbon">
          <div v-for="g in ribbon" :key="g.t" class="grp">
            <div class="sets"><div v-for="(s, i) in g.sets" :key="i" class="set"><button v-for="n in s" :key="n" type="button" :aria-label="n"><Chip :n="n" /></button></div></div>
            <div class="cap"><span>{{ g.t }}</span><svg viewBox="0 0 9 9" width="9" height="9" aria-hidden="true"><path d="M4.500 0v8M0 4.500h9M2 5l2.500 3L7 5" stroke="#999" fill="none" stroke-width="1.600" /></svg></div>
          </div>
        </div>
        <div class="g-bar">
          <button type="button" aria-label="Open"><Ico n="gopen" :s="26" /></button>
          <button type="button" class="sv" aria-label="Save"><Ico n="gsave" :s="30" /></button>
          <i class="sep"></i>
          <div class="zoom"><select aria-label="Zoom"><option>204%</option></select><svg viewBox="0 0 10 6" width="10" height="6" aria-hidden="true"><path d="M.5.500L5 5 9.500.500" fill="none" stroke="#444" /></svg></div>
          <button type="button" class="dd" aria-label="Zoom extents"><Ico n="gext" :s="28" /></button>
          <button type="button" class="dd" aria-label="Named views"><Ico n="geye" :s="28" /></button>
          <button type="button" aria-label="Sketch"><Ico n="gpen" :s="28" /></button>
          <div class="g-right">
            <button type="button" aria-label="No preview"><Ico n="cylgrey" :s="28" /></button>
            <button type="button" aria-label="Wireframe"><Ico n="cylwire" :s="28" /></button>
            <button type="button" class="on" aria-label="Shaded"><Ico n="cylred" :s="28" /></button>
            <i class="sep"></i>
            <button type="button" aria-label="Document preview"><Ico n="cylteal" :s="28" /></button>
            <button type="button" aria-label="Selected preview"><Ico n="cylgreen" :s="28" /></button>
            <button type="button" aria-label="Mesh edges"><Ico n="halfball" :s="28" /></button>
            <i class="sep"></i>
            <button type="button" class="last" aria-label="Mesh quality"><Ico n="skyball" :s="24" /></button>
          </div>
        </div>

        <main class="canvas">
          <svg class="layer" aria-hidden="true">
            <path d="M136 0v900M441 0v900M746 0v900M0 40h2000M0 142h2000M0 244h2000M0 346h2000M0 448h2000M0 550h2000M0 651h2000M0 753h2000" stroke="#bdbab1" stroke-width="2" fill="none" />
            <path v-for="w in wires" :key="w" :d="w" class="wire" />
            <path d="M369 221C414 221 434 240 483 240" fill="none" stroke="url(#wg)" stroke-width="6" />
          </svg>
          <div class="note"><i class="grip out"></i></div>
          <div class="slide">
            <label for="num">Number Slider</label>
            <div class="track">
              <svg viewBox="0 0 204 12" width="204" height="12" aria-hidden="true"><path d="M.5 0v11.500h203V0M21 4v7M41 4v7M61 4v7M82 4v7M102 4v7M122 4v7M143 4v7M163 4v7M184 4v7" fill="none" stroke="#5aa31d" /></svg>
              <input id="num" type="range" min="0" max="1" step="0.001" value="0.25" />
              <output for="num">0.250</output>
            </div>
            <i class="grip out"></i>
          </div>
          <div v-for="n in params" :key="n.t" class="param" :style="place(n)"><i class="grip in"></i>{{ n.t }}<i class="grip out"></i></div>
          <div v-for="(n, k) in comps" :key="k" class="comp" :class="{ light: n.light }" :style="place(n)">
            <ul class="ins" :style="{ width: n.i + 'px' }"><li v-for="p in n.ins" :key="p"><i class="grip in"></i>{{ p }}</li></ul>
            <div class="core"><span>{{ n.t }}</span></div>
            <ul class="outs"><li v-for="p in n.outs" :key="p">{{ p }}<i class="grip out"></i></li></ul>
          </div>
          <div class="yellow y1"><i class="grip in"></i><div class="cap1"></div><div class="cap2"></div><p><span>0</span><span>3</span></p></div>
          <div class="yellow y2"><div class="cap1"></div><div class="cap2"></div></div>
          <svg class="compass" viewBox="0 0 60 56" width="60" height="56" aria-hidden="true">
            <circle cx="31" cy="29" r="26" fill="none" stroke="#000" stroke-width="4" stroke-dasharray="108 60" stroke-dashoffset="-74" />
            <path d="M1 2l9 2v7H4z" fill="#000" />
            <circle cx="31" cy="29" r="24" fill="url(#orb)" stroke="#fff" stroke-width="2" />
            <circle cx="31" cy="29" r="25" fill="none" stroke="#555" />
            <path d="M14 15l5 1-3 3zM48 15l-5 1 3 3zM14 43l5-1-3-3zM48 43l-5-1 3-3z" fill="#fff" stroke="#fff" stroke-width="2" />
          </svg>
          <div class="recent"><Chip n="slider" /><Chip n="point" /></div>
        </main>
        <footer class="g-status">
          <svg viewBox="0 0 20 20" width="20" height="20" aria-hidden="true"><circle cx="10" cy="10" r="9.500" fill="url(#blue)" stroke="#135" /><path d="M10 3v9M10 14v3" stroke="#fff" stroke-width="3" /></svg>
          <span>Autosave complete (24 seconds ago)</span><span class="ver">1.0.0007</span>
        </footer>
      </section>
    </div>
  </div>
</template>

<style>
body { margin: 0; }
</style>

<style scoped>
.desktop {
  display: grid;
  grid-template-columns: minmax(0, 934fr) minmax(0, 896fr);
  height: 100vh;
  min-height: 900px;
  overflow: hidden;
  font: 14px/20px 'Open Sans', 'Noto Sans', sans-serif;
  color: #222;
  background: linear-gradient(90deg, #6b5a66 0, #5a4a4e 140px, #4c3e40 280px, #97705f 300px, #8d5f50 580px, #0a0a0c 620px, #0a0a0a 100%);
}
.desktop * { box-sizing: border-box; }
.defs { position: absolute; width: 0; height: 0; }
button { font: inherit; color: inherit; background: none; border: 0; padding: 0; margin: 0; white-space: nowrap; }
h1, h2, p, ul { margin: 0; padding: 0; font: inherit; list-style: none; white-space: nowrap; }
svg { display: block; flex: none; }

/* Rhino window */
.rhino { display: flex; flex-direction: column; margin: 0 -38px 7px 0; background: #e9ebf0; min-height: 0; overflow: hidden; }
.r-title { display: flex; align-items: center; height: 27px; padding-left: 4px; background: #fff; color: #000; flex: none; }
.r-title h1 { flex: 1; margin-left: 5px; }
.wbtns { display: flex; }
.wbtns button { display: flex; width: 58px; height: 24px; align-items: center; justify-content: center; }
.r-title .wbtns { margin-right: 1px; }
.r-menu { display: flex; justify-content: space-between; height: 29px; padding: 7px 158px 0 2px; background: #fff; color: #000; line-height: 22px; flex: none; }
.cmd { border-top: 4px solid #e5e7ec; background: #fff; padding-left: 1px; height: 66px; flex: none; }
.cmd p { height: 19px; padding-left: 4px; line-height: 19px; }
.prompt { display: flex; align-items: center; height: 22px; padding-left: 4px; border-top: 1px solid #b9bdcc; color: #000; }
.caret { width: 1px; height: 20px; margin-left: 4px; background: #000; }
.prompt input { flex: 1; border: 0; outline: 0; background: none; }
.plug { display: flex; align-items: center; height: 38px; margin-top: 3px; padding-left: 4px; border-top: 1px solid #cdd3e0; border-bottom: 1px solid #cdd3e0; flex: none; }
.plug-set { display: flex; }
.plug-set + .plug-set { border-left: 1px solid #c3c7d0; margin-left: 3px; padding-left: 2px; }
.cell { position: relative; display: flex; width: 28px; height: 28px; align-items: center; justify-content: center; flex: none; }
.more::after { content: ''; position: absolute; right: 1px; bottom: 2px; border: 3px solid; border-color: transparent #555 #555 transparent; }
.r-tabs { display: flex; gap: 1px; flex: none; height: 28px; padding: 4px 0 0 5px; border-bottom: 1px solid #b8c1da; overflow: hidden; }
.r-tabs button { height: 24px; padding: 0 15px; line-height: 26px; color: #3b3f46; }
.r-tabs button.on { border: 1px solid #b8c1da; border-bottom: 0; border-radius: 10px 2px 0 0; padding: 0 13px; line-height: 24px; }
.std { display: flex; flex: none; height: 48px; padding: 1px 0 0 3px; overflow: hidden; }

.work { display: flex; flex: 1; min-height: 0; }
.bar { display: grid; grid-template-columns: 28px 28px; grid-auto-rows: 28px; align-content: start; padding-top: 7px; margin-bottom: 5px; border-top: 1px solid #c6cedd; flex: none; }
.main { width: 61px; margin-left: -4px; border-right: 1px solid #d3d8e2; }
.lines { width: 64px; padding-left: 3px; margin-right: 4px; }
.center { flex: 1; min-width: 0; display: flex; flex-direction: column; }
.views { flex: 1; display: grid; grid-template: 400fr 391fr / 296fr 291fr; gap: 6px 5px; min-height: 0; }
.view { position: relative; overflow: hidden; background: #9ca3ab; border: solid #bcc5d2; border-width: 1px 0 0 1px; }
.scene { position: absolute; inset: 0; width: 100%; height: 100%; }
.scene text { font-size: 17px; fill: #555; }
.edge { fill: none; stroke: #140303; stroke-width: 1.3; }
.mark { stroke: #950000; stroke-width: 4; fill: none; }
.axis { stroke: #5b5b5d; fill: none; }
.vt { position: relative; display: flex; height: 23px; align-items: center; padding: 0 0 1px 9px; background: #c3cad3; color: #53575d; font-weight: 700; border-radius: 0 0 4px 0; }
.vt i { display: flex; align-items: center; justify-content: center; width: 14px; height: 20px; margin-left: 9px; border-left: 1px solid #666; }
.vt i::after { content: ''; border: 4px solid transparent; border-top: 5px solid #555; border-bottom: 0; }
.vt.on { background: #859cf0; color: #1c2c44; }
.vtabs { display: flex; height: 32px; padding: 4px 0 4px 13px; color: #3b3f46; }
.vtabs button { margin-right: 22px; height: 24px; }
.vtabs .on { border: solid #b6bfd2; border-width: 0 1px 1px 0; border-radius: 0 0 4px 0; padding: 0 6px 0 0; margin-right: 16px; }

.panel { width: 244px; margin-left: 11px; flex: none; display: flex; flex-direction: column; color: #3b3f46; overflow: hidden; }
.panel h2 { display: flex; align-items: center; padding-left: 2px; height: 24px; flex: none; }
.panel h2::after { content: ''; flex: 1; height: 3px; margin-left: 5px; border: solid #c6cedd; border-width: 1px 0; }
.p-folder { display: flex; justify-content: center; height: 29px; padding: 4px 14px 0 0; flex: none; }
.p-tabs { display: grid; grid-template-columns: repeat(4, 58px); grid-template-rows: 28px 27px; flex: none; }
.p-tabs button { display: flex; align-items: center; justify-content: center; }
.p-tabs .on { border: 1px solid #b8c1da; border-bottom: 0; }
.p-box { flex: 1; display: flex; flex-direction: column; border: 1px solid #b8c1da; margin-bottom: 6px; min-height: 0; background: #fff; }
.p-tools { display: flex; height: 46px; align-items: center; padding: 2px 0 0 5px; background: #e9ebf0; border-bottom: 1px solid #b8c1da; flex: none; }
.p-tools button { width: 26px; display: flex; justify-content: center; flex: none; }
table { border-collapse: collapse; table-layout: fixed; width: 100%; }
th, td { height: 24px; padding: 0; width: 21px; text-align: left; font-weight: 400; border-bottom: 1px solid #e8e8ee; white-space: nowrap; overflow: hidden; }
th { height: 27px; border: 0; border-right: 1px solid #dcdde3; }
td svg { margin: 0 auto; }
.nm { width: 78px; padding-left: 9px; }
th.nm { padding-left: 4px; }
.mt { width: auto; padding-left: 5px; }
.cur td { font-weight: 700; color: #222; }
.sw { display: block; width: 14px; height: 14px; background: #fbce93; border: 1px solid #222; margin: 0 auto; flex: none; }
.sw.blk { background: #000; }
.dot { display: inline-block; width: 17px; height: 17px; border: 1px solid #222; border-radius: 50%; background: #fbce93; vertical-align: middle; margin-right: 6px; }
.dot.pale { background: #f6f6f6; border-color: #f2f2f2; }
.hscroll { display: flex; align-items: center; height: 19px; margin-top: auto; background: #f0f0f0; padding-left: 5px; flex: none; }
.hscroll i { width: 110px; height: 19px; margin-left: 7px; background: #cdcdcd; }

.osnap { display: flex; align-items: center; height: 31px; padding: 3px 0 0 7px; flex: none; color: #3b3f46; }
.osnap label { display: flex; align-items: center; margin-right: 8px; white-space: nowrap; }
.osnap label.off + label { margin-left: 9px; }
.osnap input { appearance: none; display: flex; justify-content: center; width: 16px; height: 16px; margin: 0 4px 0 0; background: #fff; border: 1px solid #333; flex: none; }
.osnap input:checked::before { content: ''; width: 5px; height: 10px; border: solid #333; border-width: 0 2px 2px 0; transform: rotate(42deg); }
.osnap input:disabled { border-color: #b5b5b5; background: #e4e6e9; }
.r-status { display: flex; height: 21px; border-top: 1px solid #c3c9d6; line-height: 21px; flex: none; color: #333840; overflow: hidden; }
.r-status span, .r-status button { border-right: 1px solid #b9c3d6; overflow: hidden; white-space: nowrap; flex: none; }
.c0 { width: 40px; direction: rtl; }
.c1 { width: 81px; text-align: center; }
.r-status .c2 { display: flex; align-items: center; width: 155px; padding-left: 5px; border: 0; }
.c2 .sw { margin: 0 4px 0 0; }
.r-status button { text-align: left; padding-left: 1px; }
.r-status button.on { font-weight: 700; background: #cfd9ec; }

/* right side: a window edge behind, then Grasshopper */
.right { position: relative; display: flex; flex-direction: column; min-height: 0; margin-bottom: 3px; }
.behind { display: flex; justify-content: flex-end; height: 12px; margin-left: 38px; padding: 7px 48px 0 0; background: linear-gradient(#fff, #e4e4e4); overflow: hidden; box-shadow: inset 8px 0 8px -6px #bbb; flex: none; }
.gh { display: flex; flex-direction: column; flex: 1; min-height: 0; border-left: 2px solid #8b8b8d; background: #f0f0f0; box-shadow: -3px 2px 10px rgba(0, 0, 0, .35); }
.g-title { display: flex; align-items: center; height: 37px; border-top: 1px solid #8b8b8d; background: #fff; color: #999; padding-left: 7px; flex: none; }
.g-title h1 { flex: 1; }
.g-title .wbtns { margin-right: -9px; }
.cl { overflow: visible; }
.g-menu { display: flex; justify-content: space-between; height: 34px; line-height: 36px; color: #111; background: linear-gradient(90deg, #f2f2f2, #fdfdfd 80%); flex: none; }
.g-menu div { display: flex; gap: 22px; padding-left: 13px; }
.g-menu span { padding-right: 1px; }
.g-tabs, .ribbon { font: 13px/20px 'Liberation Sans', Arial, sans-serif; }
.g-tabs { display: flex; gap: 1px; height: 28px; color: #6c6c6c; border-bottom: 1px solid #9a9a9a; background: #efefef; overflow: hidden; flex: none; }
.g-tabs button { padding: 3px 10px 0; height: 27px; }
.g-tabs .on { background: #fff; color: #111; border: 1px solid #999; border-bottom: 0; border-radius: 6px 6px 0 0; padding: 0 10px 2px 8px; margin-left: -1px; }
.ribbon { display: flex; gap: 5px; height: 108px; padding: 3px 0 0 2px; background: linear-gradient(#d2d2d2, #efefef); overflow: hidden; flex: none; }
.grp { height: 90px; border: 1px solid #777; border-radius: 5px; overflow: hidden; background: linear-gradient(#dcdcdc, #efefef); flex: none; }
.sets { display: flex; height: 72px; padding: 0 1px; }
.set { display: grid; grid-auto-flow: column; grid-template-rows: 35px 35px; grid-auto-columns: 35px; }
.set + .set { border-left: 1px solid #aaa; margin-left: 6px; padding-left: 5px; }
.set button { display: flex; align-items: center; justify-content: center; }
.cap { position: relative; height: 17px; background: linear-gradient(#111, #2c2c2c); color: #fff; text-align: center; font-size: 12px; line-height: 16px; }
.cap svg { position: absolute; right: 4px; top: 4px; }
.g-bar { display: flex; align-items: center; height: 38px; border-top: 2px solid #777; background: linear-gradient(#fff, #eee); padding: 0 0 2px 3px; flex: none; }
.g-bar button { display: flex; align-items: center; justify-content: center; height: 34px; }
.sv { margin-left: 9px; }
.sep { width: 1px; height: 28px; background: #bbb; margin: 0 6px; flex: none; }
.g-bar > .sep { margin: 0 4px 0 7px; }
.zoom { position: relative; width: 180px; margin-right: 6px; }
.zoom select { appearance: none; width: 100%; height: 27px; border: 1px solid #777; border-radius: 0; background: #fff; padding: 0 3px; font: inherit; color: #222; }
.zoom svg { position: absolute; right: 5px; top: 11px; }
.dd::after { content: ''; border: 3px solid transparent; border-top: 3px solid #000; border-bottom: 0; margin: 0 7px 0 9px; }
.g-right { display: flex; align-items: center; margin-left: auto; padding-right: 7px; }
.g-right button { width: 34px; }
.g-right .last { width: 24px; }
.g-right .on { border: 1px solid #1f76bd; background: #eef5fb; }

.canvas { position: relative; flex: 1; min-height: 0; overflow: hidden; background: #d4d0c8; font-size: 21px; line-height: 28px; color: #111; }
.layer { position: absolute; inset: 0; width: 100%; height: 100%; }
.wire { fill: none; stroke: #5a5852; stroke-width: 6; }
.grip { position: absolute; top: 50%; width: 10px; height: 20px; margin-top: -10px; background: #fff; border: 4px solid #000; }
.grip.in { left: -11px; border-right: 0; border-radius: 10px 0 0 10px; }
.grip.out { right: -11px; border-left: 0; border-radius: 0 10px 10px 0; }
.note { position: absolute; left: -20px; top: -20px; width: 141px; height: 153px; background: #cdff59; border: 2px solid #28330f; border-radius: 8px; }
.note .grip { top: 49px; }
.slide { position: absolute; left: -60px; top: 201px; width: 421px; height: 42px; display: flex; border: 2px solid #123f05; border-radius: 6px; background: linear-gradient(#cff7ac 0, #a5ee68 24%, #90e640 26%, #84dc34 100%); font-size: 20px; }
.slide label { width: 175px; padding: 5px 13px 0 0; text-align: right; white-space: nowrap; border-right: 2px solid #123f05; border-radius: 4px 0 0 4px; color: #14380a; background: linear-gradient(#a5e584 0, #79d04a 24%, #5cc41c 26%, #50b40e 100%); }
.track { position: relative; flex: 1; padding: 9px 0 0 19px; }
.track input { position: absolute; left: 12px; top: 11px; width: 215px; height: 16px; margin: 0; appearance: none; background: none; }
.track input::-webkit-slider-thumb { appearance: none; width: 16px; height: 16px; border: 4px solid #000; border-radius: 50%; background: #fff; }
.track output { position: absolute; left: 84px; top: 5px; color: #14380a; }
.param, .comp { position: absolute; border: 2px solid #26262a; border-radius: 7px; box-shadow: 0 1px 3px rgba(0, 0, 0, .3); background: linear-gradient(#f1f1f4 0, #cfced7 45%, #a19fb0 46%, #8f8da1 100%); white-space: nowrap; }
.param { height: 42px; text-align: center; line-height: 37px; }
.comp { display: flex; padding: 1px 0 3px; background: linear-gradient(#f2f2f5 0, #c0bfca 34%, #a3a1b2 35%, #908ea3 100%); }
.comp.light { background: linear-gradient(#f6f6f6 0, #d9d9d9 30%, #d4d4d4 60%, #bcbcbc 100%); }
.ins, .outs { display: flex; flex-direction: column; }
.ins { margin-left: -2px; text-align: right; }
.outs { flex: 1; }
.ins li, .outs li { position: relative; flex: 1; display: flex; align-items: center; }
.ins li { justify-content: flex-end; padding-right: 10px; }
.outs li { padding-left: 7px; }
.ins .grip { left: -9px; }
.core { width: 50px; border: 2px solid #111; border-radius: 6px; background: linear-gradient(#9a9a9a 0, #5c5c5c 18%, #3c3c3c 20%, #3a3a3a 60%, #4c4c4c 100%); color: #fff; font-weight: 700; display: flex; align-items: center; justify-content: center; flex: none; }
.core span { writing-mode: vertical-rl; transform: rotate(180deg); font-size: 26px; line-height: 42px; }
.yellow { position: absolute; left: 846px; width: 120px; border: 2px solid #222; border-radius: 6px; background: #fffc5c; overflow: visible; }
.y1 { top: 641px; height: 121px; }
.y2 { top: 790px; height: 90px; }
.cap1 { height: 36px; background: #cbca4a; border-bottom: 2px solid #222; border-radius: 4px 4px 0 0; }
.cap2 { height: 38px; background: linear-gradient(#b3b238, #d3d24e 40%); }
.yellow p { display: flex; height: 42px; font-size: 18px; line-height: 26px; }
.yellow span { width: 27px; text-align: center; border-right: 1px solid #d6d24a; }
.compass { position: absolute; left: 834px; top: 775px; }
.recent { position: absolute; left: 0; bottom: 0; display: flex; width: 79px; height: 36px; align-items: center; padding: 0 0 0 2px; border: solid #111; border-width: 1px 1px 1px 0; background: linear-gradient(90deg, transparent 90%, #777 90%), linear-gradient(#ddd, #8a8a8a); }
.recent svg { margin-right: 4px; }
.g-status { display: flex; align-items: center; height: 27px; border-top: 2px solid #fff; background: #f0f0f0; padding: 4px 33px 0 2px; flex: none; white-space: nowrap; }
.g-status span { margin-left: 6px; }
.g-status .ver { margin-left: auto; color: #777; font-size: 13px; }
</style>
